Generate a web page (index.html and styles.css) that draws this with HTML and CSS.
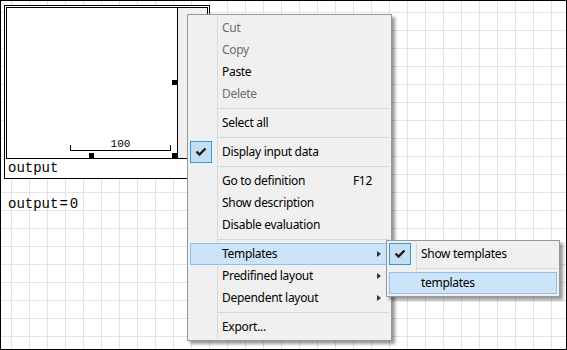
FILE: index.html
```html
<!DOCTYPE html>
<html lang="en">
<head>
    <meta charset="UTF-8">
    <meta name="viewport" content="width=device-width, initial-scale=1.0">
    <title>Region context menu</title>
    <link rel="stylesheet" href="styles.css">
</head>
<body>
    <div class="sheet">
        <!-- output region on the worksheet -->
        <div class="region">
            <div class="frame">
                <div class="plot">
                    <span class="handle handle-right"></span>
                    <span class="handle handle-bottom"></span>
                    <span class="handle handle-corner"></span>
                    <div class="scale"><span class="scale-label">100</span></div>
                </div>
                <div class="toolbar"></div>
            </div>
            <div class="region-name">output</div>
        </div>

        <div class="result">output<span class="eq">=</span>0</div>

        <!-- context menu -->
        <div class="menu main-menu">
            <div class="item disabled"><span class="icon"></span><span class="label">Cut</span></div>
            <div class="item disabled"><span class="icon"></span><span class="label">Copy</span></div>
            <div class="item"><span class="icon"></span><span class="label">Paste</span></div>
            <div class="item disabled"><span class="icon"></span><span class="label">Delete</span></div>
            <div class="sep"></div>
            <div class="item"><span class="icon"></span><span class="label">Select all</span></div>
            <div class="sep"></div>
            <div class="item">
                <span class="icon checked">
                    <svg width="12" height="10" viewBox="0 0 12 10"><polyline points="1.5,4.5 4.5,7.5 10.5,1.5" /></svg>
                </span>
                <span class="label">Display input data</span>
            </div>
            <div class="sep"></div>
            <div class="item"><span class="icon"></span><span class="label">Go to definition</span><span class="key">F12</span></div>
            <div class="item"><span class="icon"></span><span class="label">Show description</span></div>
            <div class="item"><span class="icon"></span><span class="label">Disable evaluation</span></div>
            <div class="sep"></div>
            <div class="item active"><span class="icon"></span><span class="label">Templates</span><span class="arrow"></span></div>
            <div class="item"><span class="icon"></span><span class="label">Predifined layout</span><span class="arrow"></span></div>
            <div class="item"><span class="icon"></span><span class="label">Dependent layout</span><span class="arrow"></span></div>
            <div class="sep"></div>
            <div class="item"><span class="icon"></span><span class="label">Export...</span></div>
        </div>

        <!-- Templates submenu -->
        <div class="menu sub-menu">
            <div class="item">
                <span class="icon checked">
                    <svg width="12" height="10" viewBox="0 0 12 10"><polyline points="1.5,4.5 4.5,7.5 10.5,1.5" /></svg>
                </span>
                <span class="label">Show templates</span>
            </div>
            <div class="sep"></div>
            <div class="item active"><span class="icon"></span><span class="label">templates</span></div>
        </div>
    </div>
</body>
</html>
```

FILE: styles.css
```css
* {
    margin: 0;
    padding: 0;
    box-sizing: border-box;
}

body {
    font-family: "Noto Sans", sans-serif;
    background-color: #fff;
}

/* worksheet with an 18px grid */
.sheet {
    position: relative;
    width: 567px;
    height: 350px;
    border: 1px solid #000;
    overflow: hidden;
    background-color: #fff;
    background-image:
        linear-gradient(to right, #e3e3e3 1px, transparent 1px),
        linear-gradient(to bottom, #e3e3e3 1px, transparent 1px);
    background-size: 18px 18px;
    background-position: 10px 11px;
}

/* ----------  REGION  ---------- */
.region {
    position: absolute;
    left: 3px;
    top: 4px;
    width: 206px;
    border: 1px solid #000;
    padding: 1px 1px 0;
    background-color: #fff;
}

.frame {
    display: flex;
    height: 152px;
    border: 1px solid #000;
}

.plot {
    position: relative;
    width: 171px;
    border-right: 1px solid #000;
    background-color: #fff;
}

.toolbar {
    flex: 1;
    background-color: #f0f0f0;
}

.handle {
    position: absolute;
    width: 5px;
    height: 5px;
    background-color: #000;
}

.handle-right  { left: 165px; top: 72px; }
.handle-bottom { left: 82px;  top: 145px; }
.handle-corner { left: 165px; top: 145px; }

.scale {
    position: absolute;
    left: 63px;
    top: 137px;
    width: 101px;
    height: 6px;
    border: 1px solid #000;
    border-top: none;
}

.scale-label {
    position: absolute;
    left: 0;
    right: 0;
    top: -6px;
    text-align: center;
    font-family: "Liberation Mono", monospace;
    font-size: 11px;
    line-height: 10px;
}

.region-name {
    height: 19px;
    padding-left: 2px;
    font-family: "Liberation Mono", monospace;
    font-size: 14px;
    line-height: 19px;
}

.result {
    position: absolute;
    left: 7px;
    top: 195px;
    font-family: "Liberation Mono", monospace;
    font-size: 14px;
    line-height: 16px;
}

.result .eq {
    margin: 0 2px 0 1px;
}

/* ----------  MENUS  ---------- */
.menu {
    position: absolute;
    padding: 2px;
    border: 1px solid #979797;
    background-color: #f0f0f0;
    background-image: linear-gradient(#d9d9d9, #d9d9d9);
    background-origin: content-box;
    background-size: 1px 100%;
    background-position: 27px 0;
    background-repeat: no-repeat;
    box-shadow: 3px 3px 3px rgba(0,0,0,0.4);
    font-size: 12px;
    letter-spacing: -0.3px;
    color: #000;
}

.main-menu {
    left: 186px;
    top: 13px;
    width: 205px;
}

.sub-menu {
    left: 385px;
    top: 239px;
    width: 174px;
}

.item {
    display: flex;
    align-items: center;
    height: 22px;
    border: 1px solid transparent;
    white-space: nowrap;
}

.item.disabled {
    color: #6d6d6d;
}

.item.active {
    background-color: #cce4f7;
    border-color: #93bfec;
}

.icon {
    flex: none;
    display: flex;
    align-items: center;
    justify-content: center;
    width: 22px;
    height: 22px;
    margin: -1px 10px -1px -1px;
}

.icon.checked {
    border: 1px solid #3399dd;
    background-color: #c4dff4;
}

.icon svg polyline {
    fill: none;
    stroke: #1e1e1e;
    stroke-width: 2.4;
}

.label {
    flex: 1;
    line-height: 20px;
}

.key {
    margin-right: 16px;
    line-height: 20px;
}

.arrow {
    width: 0;
    height: 0;
    margin-right: 7px;
    border-left: 4px solid #333;
    border-top: 3.5px solid transparent;
    border-bottom: 3.5px solid transparent;
}

.sep {
    height: 1px;
    margin: 3px 0 3px 28px;
    background-color: #d7d7d7;
}
```
